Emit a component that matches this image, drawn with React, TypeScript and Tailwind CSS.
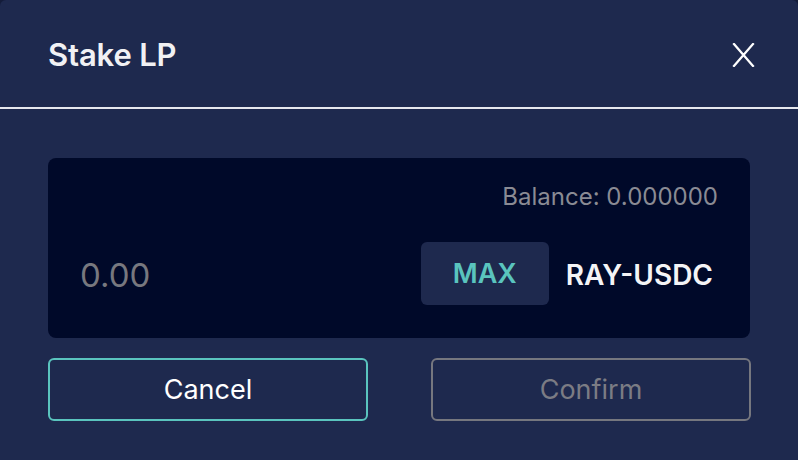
export default function App() {
  return (
    <div className="h-[460px] w-[798px] bg-[#141c3a]" style={{ fontFamily: 'Inter, "Noto Sans", sans-serif' }}>
      <div className="flex h-full flex-col rounded-t-[6px] bg-[#1e294e]">
        <header className="flex h-[107px] items-center justify-between pl-12 pr-[43px] pt-[3px]">
          <h1 className="text-[31px] font-semibold tracking-[-0.005em] text-[#f1f1f4]">Stake LP</h1>
          <button className="text-white">
            <svg width="24" height="24" viewBox="0 0 24 24" fill="none" stroke="currentColor" strokeWidth="2.2" strokeLinecap="square">
              <path d="M3 1 L22 23 M22 1 L3 23" />
            </svg>
          </button>
        </header>
        <div className="h-[2px] bg-[#e6e7ee]" />
        <div className="px-12 pt-[49px]">
          <div className="flex h-[180px] flex-col rounded-lg bg-[#000929] pl-8 pr-8 pt-[24px]">
            <div className="text-right text-[24px] leading-[30px] text-[#8a8b94]">Balance: 0.000000</div>
            <div className="mt-[30px] flex h-[63px] items-center">
              <input
                className="min-w-0 flex-1 bg-transparent pt-1 text-[33px] text-white outline-none placeholder:text-[#77787f]"
                placeholder="0.00"
              />
              <button className="flex h-[63px] w-[128px] items-center justify-center rounded-md bg-[#1e294e] pt-[2px] text-[27px] font-semibold text-[#5ac4be]">
                MAX
              </button>
              <span className="ml-[17px] mr-[5px] pt-[2px] text-[28px] font-semibold text-[#f4f4f6]">RAY-USDC</span>
            </div>
          </div>
          <div className="mt-5 flex justify-between">
            <button className="h-[63px] w-[320px] rounded-md border-2 border-[#5ac4be] pt-[2px] text-[27px] text-white">
              Cancel
            </button>
            <button className="mr-[-1px] h-[63px] w-[320px] rounded-md border-2 border-[#76777f] pt-[2px] text-[27px] text-[#7b7c84]">
              Confirm
            </button>
          </div>
        </div>
      </div>
    </div>
  );
}
